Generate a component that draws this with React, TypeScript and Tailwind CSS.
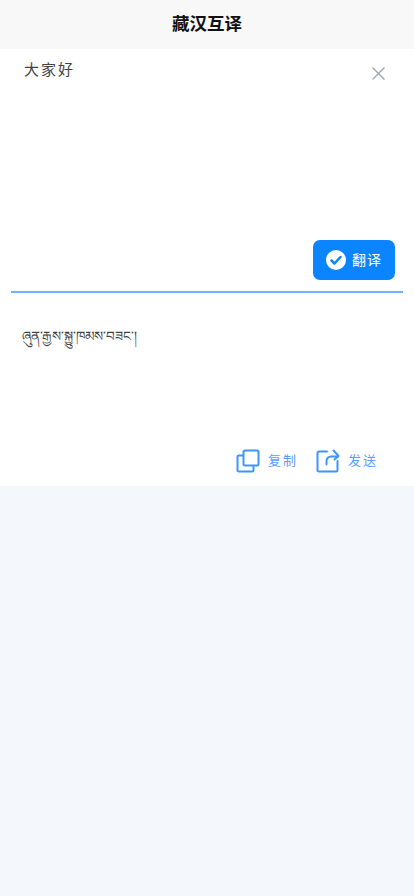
// Tibetan / Chinese translate screen: input panel, translate button, result panel with actions.
const CJK = "font-['Liberation_Sans','Noto_Sans_CJK_SC',sans-serif]";

function CopyIcon() {
  return (
    <svg width="24" height="24" viewBox="0 0 24 24" fill="none" stroke="#3b96ff" strokeWidth="2" strokeLinejoin="round" strokeLinecap="round">
      <rect x="7.500" y="1.500" width="15" height="15" rx="1.500" />
      <path d="M7 6.500H3a1.500 1.500 0 0 0-1.500 1.500v13A1.500 1.500 0 0 0 3 22.500h13a1.500 1.500 0 0 0 1.500-1.500v-4" />
    </svg>
  );
}

function SendIcon() {
  return (
    <svg width="24" height="24" viewBox="0 0 24 24" fill="none" stroke="#3b96ff" strokeWidth="2" strokeLinejoin="round" strokeLinecap="round">
      <path d="M11 2.500H3a1.500 1.500 0 0 0-1.500 1.500v17A1.500 1.500 0 0 0 3 22.500h17a1.500 1.500 0 0 0 1.500-1.500v-9" />
      <path d="M10.500 15.500v-3.500a4.500 4.500 0 0 1 4.500-4.500H22" />
      <path d="M17.500 1.500L22.500 7l-4 3.500" />
    </svg>
  );
}

export default function App() {
  return (
    <div className={`min-h-[896px] bg-[#f4f7fc] ${CJK}`}>
      <header className="flex h-[49px] items-center justify-center bg-[#f8f8f8]">
        <h1 className="text-[17.500px] font-bold text-[#111]">藏汉互译</h1>
      </header>

      <section className="bg-white pl-[11px] pr-[11px]">
        <div className="relative h-[242px]">
          <p className="pl-[13px] pt-[11px] text-[15px] leading-[20px] tracking-[2px] text-[#444]">大家好</p>
          <svg className="absolute right-[18px] top-[18px]" width="13" height="13" viewBox="0 0 13 13" fill="none" stroke="#a3adb5" strokeWidth="1.500">
            <path d="M0.500 0.500l12 12M12.500 0.500l-12 12" />
          </svg>
          <button className="absolute bottom-[11px] right-[8px] flex h-[40px] w-[82px] items-center justify-center gap-[6px] rounded-[7px] bg-[#0a84ff] text-[14px] tracking-[1px] text-white">
            <svg width="20" height="20" viewBox="0 0 20 20">
              <circle cx="10" cy="10" r="10" fill="#fff" />
              <path d="M5.500 10.500l3 3 6-6.500" fill="none" stroke="#0a84ff" strokeWidth="2.500" strokeLinecap="round" strokeLinejoin="round" />
            </svg>
            翻译
          </button>
        </div>
        <div className="h-[2px] bg-[#6cb4ff]" />

        <div className="flex h-[193px] flex-col">
          <p className="pl-[11px] pt-[32px] text-[13.500px] leading-[24px] text-[#444]">ཞུན་རྒྱས་སྐྱུ་ཁམས་བཟང་།</p>
          <div className="mb-[13px] mt-auto flex items-center justify-end gap-[18px] pr-[25px] text-[13px] tracking-[2px] text-[#5b9dff]">
            <button className="flex items-center gap-[8px]"><CopyIcon />复制</button>
            <button className="flex items-center gap-[8px]"><SendIcon />发送</button>
          </div>
        </div>
      </section>
    </div>
  );
}
